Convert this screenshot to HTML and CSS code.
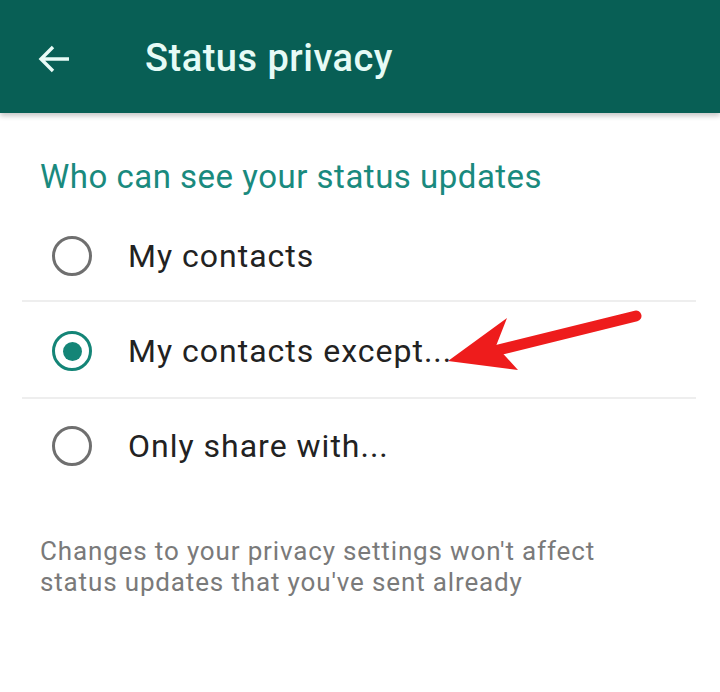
FILE: index.html
```html
<!DOCTYPE html>
<html>
<head>
<meta charset="utf-8">
<link rel="stylesheet" href="styles.css">
</head>
<body>
<div class="screen">
  <header class="appbar">
    <svg class="back" width="34" height="30" viewBox="0 0 34 30"><path d="M32 15H4M16 3L4 15l12 12" fill="none" stroke="#e8fbf6" stroke-width="3.4" stroke-linecap="butt" stroke-linejoin="miter"/></svg>
    <h1 class="title">Status privacy</h1>
  </header>
  <main class="content">
    <h2 class="section">Who can see your status updates</h2>
    <ul class="options">
      <li class="option"><span class="radio"></span><span class="label">My contacts</span></li>
      <li class="option"><span class="radio checked"></span><span class="label">My contacts except...</span></li>
      <li class="option"><span class="radio"></span><span class="label">Only share with...</span></li>
    </ul>
    <p class="note">Changes to your privacy settings won't affect status updates that you've sent already</p>
  </main>
  <svg class="pointer" width="720" height="692" viewBox="0 0 720 692">
    <line x1="636" y1="316" x2="490" y2="352" stroke="#ee1c1c" stroke-width="11" stroke-linecap="round"/>
    <polygon points="448,361 507,318 496,346 518,370" fill="#ee1c1c"/>
  </svg>
</div>
</body>
</html>
```
FILE: styles.css
```css
* { box-sizing: border-box; margin: 0; padding: 0; }
html, body { width: 720px; height: 692px; background: #fff; overflow: hidden; }
body { font-family: Roboto, "Noto Sans", sans-serif; }
.screen { position: relative; width: 720px; height: 692px; }
.appbar {
  height: 113px;
  background: #085f55;
  display: flex;
  align-items: center;
  padding-left: 37px;
  box-shadow: 0 3px 5px rgba(0,0,0,0.22);
  position: relative;
  z-index: 1;
}
.back { flex: none; margin-top: 4px; }
.title {
  margin-left: 74px;
  font-size: 38px;
  font-weight: 500;
  color: #e6fbf6;
  letter-spacing: 0.5px;
  margin-top: 2px;
}
.content { padding-top: 44px; }
.section {
  padding-left: 40px;
  font-size: 33px;
  font-weight: 400;
  color: #1a8a7e;
  line-height: 40px;
  letter-spacing: 0.5px;
}
.options { list-style: none; margin-top: 12px; padding: 0 24px 0 22px; }
.option {
  height: 97px;
  padding-top: 3px;
  display: flex;
  align-items: center;
  border-bottom: 2px solid #eeeeee;
}
.option:first-child { height: 107px; padding-top: 16px; margin-top: -14px; }
.option:last-child { border-bottom: none; height: 94px; padding-top: 0; }
.radio {
  width: 40px; height: 40px;
  border: 3.5px solid #6f6f6f;
  border-radius: 50%;
  margin-left: 30px;
  flex: none;
  display: flex; align-items: center; justify-content: center;
}
.radio.checked { border-color: #148577; }
.radio.checked::after {
  content: ""; width: 19px; height: 19px; border-radius: 50%; background: #148577;
}
.label {
  margin-left: 36px;
  font-size: 32px;
  color: #222;
  letter-spacing: 1px;
}
.note {
  margin-top: 43px;
  padding: 0 100px 0 40px;
  font-size: 26px;
  line-height: 31px;
  color: #7a7a7a;
  letter-spacing: 0.85px;
}
.pointer { position: absolute; left: 0; top: 0; pointer-events: none; z-index: 2; }
```
